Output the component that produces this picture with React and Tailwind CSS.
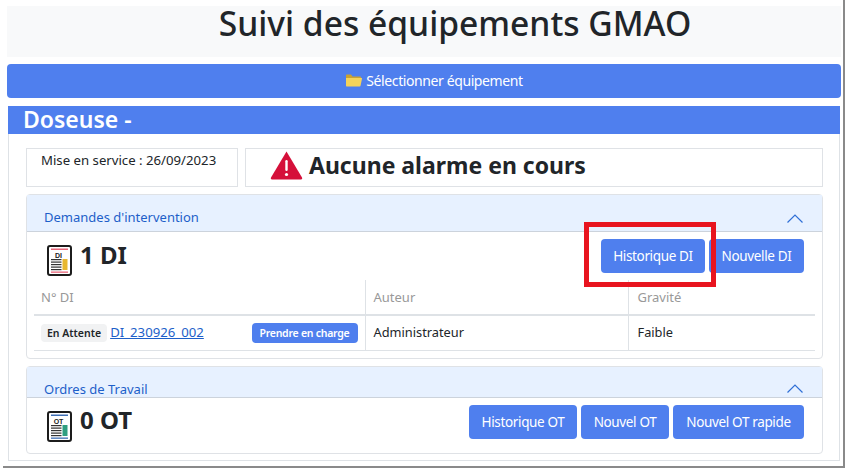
import React from 'react';

function FolderIcon() {
  return (
    <svg width="16" height="13" viewBox="0 0 16 13" className="shrink-0">
      <path d="M0 1.500C0 .8.5.5 1 .5h4l1.500 2H14c.6 0 1 .4 1 1V4H0z" fill="#c9a233" />
      <path d="M0 4h15.500c.4 0 .6.3.5.7L14.600 11.600c-.1.6-.5.9-1 .9H1c-.6 0-1-.4-1-1z" fill="#f5d35a" />
    </svg>
  );
}

function AlertIcon() {
  return (
    <svg width="33" height="29" viewBox="0 0 33 29" className="shrink-0">
      <path d="M16.500 .5L32 26.500c.5 1 0 2-1 2H2c-1 0-1.500-1-1-2z" fill="#d5103a" />
      <rect x="15.300" y="9" width="2.400" height="11" rx="1.200" fill="#fff" />
      <circle cx="16.500" cy="23.500" r="1.600" fill="#fff" />
    </svg>
  );
}

function DocIcon({ label, accent, bar }) {
  return (
    <svg width="25" height="31" viewBox="0 0 25 31" className="shrink-0">
      <rect x="1" y="1" width="23" height="29" rx="2" fill="#fff" stroke="#1c1c1c" strokeWidth="2" />
      <rect x="4" y="3.500" width="17" height="1.500" fill={accent} />
      <text x="11.500" y="12.500" textAnchor="middle" fontSize="7" fontWeight="700" fontFamily="'Liberation Sans', sans-serif" fill="#222">{label}</text>
      <rect x="4" y="14" width="10.500" height="1.200" fill="#333" />
      <rect x="4" y="16.500" width="10.500" height="1.200" fill="#333" />
      <rect x="4" y="19" width="10.500" height="1.200" fill="#333" />
      <rect x="4" y="21.500" width="10.500" height="1.200" fill="#333" />
      <rect x="4" y="24" width="10.500" height="1.200" fill="#333" />
      <rect x="15.500" y="14" width="5" height="11" fill={bar} />
      <rect x="4" y="26.500" width="17" height="1.300" fill={accent} />
    </svg>
  );
}

function Chevron() {
  return (
    <svg width="16" height="9" viewBox="0 0 16 9" fill="none" stroke="#2f6fd6" strokeWidth="1.200">
      <path d="M.5 8.500L8 1l7.500 7.500" />
    </svg>
  );
}

function Btn({ children, className = '' }) {
  return (
    <button type="button" className={`h-[34px] rounded-[4px] bg-[#4f7fee] text-[13.500px] tracking-[-0.35px] text-white ${className}`}>
      {children}
    </button>
  );
}

export default function App() {
  return (
    <div className="relative h-[468px] w-[846px] overflow-hidden bg-white font-['Noto_Sans','Open_Sans',sans-serif] text-[#212529]">
      <div className="ml-[3px] h-[468px] w-[842px] border-r-2 border-b-2 border-[#8a8a8a] pt-1.5 pl-1">
        <div className="h-[51px] w-[834px] bg-[#f8f9fa] pl-[62px] text-center">
          <h1 className="text-[33.600px] leading-[34px] font-medium">Suivi des équipements GMAO</h1>
        </div>

        <button type="button" className="mt-[7px] flex h-[34px] w-[834px] items-center justify-center gap-1 rounded-[4px] bg-[#4f7fee] pb-px pl-[21px] text-[14px] tracking-[-0.4px] text-white">
          <FolderIcon />
          Sélectionner équipement
        </button>

        <div className="mt-2 ml-px h-[355px] w-[832px] border-x border-b border-[#dee2e6] px-[17px]">
          <div className="-mx-[18px] h-[28px] bg-[#4f7fee] pl-[15px] text-[23px] leading-[27px] font-semibold text-white">Doseuse -</div>

          <div className="mt-[14px] flex gap-[7px]">
            <div className="h-[39px] w-[212px] shrink-0 border border-[#dfe2e6] pl-[14px] text-[13.200px] leading-[23px]">Mise en service : 26/09/2023</div>
            <div className="flex h-[39px] w-[578px] shrink-0 items-center gap-[6px] border border-[#dfe2e6] pb-1 pl-6 text-[23px] font-bold">
              <AlertIcon />
              Aucune alarme en cours
            </div>
          </div>

          <div className="mt-[7px] h-[165px] w-[797px] rounded-[4px] border border-[#dfe2e6]">
            <div className="flex h-[37px] items-end justify-between border-b border-[#ccd3dc] bg-[#e7f1ff] pr-[19px] pb-[4px] pl-[17px] text-[13px] text-[#1d5fc9]">
              Demandes d'intervention
              <span className="mb-1"><Chevron /></span>
            </div>
            <div className="flex h-[48px] justify-between pr-[18px] pl-[20px]">
              <div className="flex gap-2 pt-[13px]">
                <DocIcon label="DI" accent="#e8667a" bar="#e8b830" />
                <span className="-mt-[8px] text-[24px] leading-[36px] font-bold">1 DI</span>
              </div>
              <div className="flex gap-1 pt-[7px]">
                <Btn className="w-[104px]">Historique DI</Btn>
                <Btn className="w-[95px]">Nouvelle DI</Btn>
              </div>
            </div>
            <table className="mx-[7px] w-[781px] table-fixed text-[12.800px]">
              <thead>
                <tr className="h-[35px] border-b-2 border-[#dee2e6] text-left text-[13px] font-normal text-[#999]">
                  <th className="w-[331px] pt-0.5 pl-[7px] font-normal">N° DI</th>
                  <th className="w-[263px] border-l border-[#dee2e6] pt-0.5 pl-2 font-normal">Auteur</th>
                  <th className="border-l border-[#dee2e6] pt-0.5 pl-[9px] font-normal">Gravité</th>
                </tr>
              </thead>
              <tbody>
                <tr className="h-[35px] border-b border-[#dee2e6]">
                  <td className="pl-[7px]">
                    <div className="flex items-center">
                      <span className="rounded-[4px] bg-[#f1f2f3] px-[6px] py-0.5 text-[10.500px] leading-[14px] font-semibold">En Attente</span>
                      <a href="#di" className="ml-[3px] text-[13.200px] text-[#1d5fc9] underline">DI_230926_002</a>
                      <span className="mr-[7px] ml-auto w-[106px] rounded-[4px] bg-[#4f7fee] py-0.5 text-center text-[10.500px] leading-[16px] font-semibold tracking-[-0.25px] text-white">Prendre en charge</span>
                    </div>
                  </td>
                  <td className="border-l border-[#dee2e6] pl-2">Administrateur</td>
                  <td className="border-l border-[#dee2e6] pl-[9px]">Faible</td>
                </tr>
              </tbody>
            </table>
          </div>

          <div className="mt-[7px] h-[88px] w-[797px] rounded-[4px] border border-[#dfe2e6]">
            <div className="flex h-[31px] items-end justify-between border-b border-[#ccd3dc] bg-[#e7f1ff] pr-[19px] pl-[17px] text-[13px] text-[#1d5fc9]">
              <span className="leading-[16px]">Ordres de Travail</span>
              <span className="mb-1"><Chevron /></span>
            </div>
            <div className="flex justify-between pr-[18px] pl-[20px]">
              <div className="flex gap-2 pt-[13px]">
                <DocIcon label="OT" accent="#3f6fb5" bar="#2f9e80" />
                <span className="-mt-[9px] text-[24px] leading-[36px] font-bold">0 OT</span>
              </div>
              <div className="flex gap-1 pt-[7px]">
                <Btn className="w-[108px]">Historique OT</Btn>
                <Btn className="w-[88px]">Nouvel OT</Btn>
                <Btn className="w-[131px]">Nouvel OT rapide</Btn>
              </div>
            </div>
          </div>
        </div>
      </div>

      <div className="absolute top-[222px] left-[584px] h-[65px] w-[132px] border-[5px] border-[#e8141f]" />
    </div>
  );
}
